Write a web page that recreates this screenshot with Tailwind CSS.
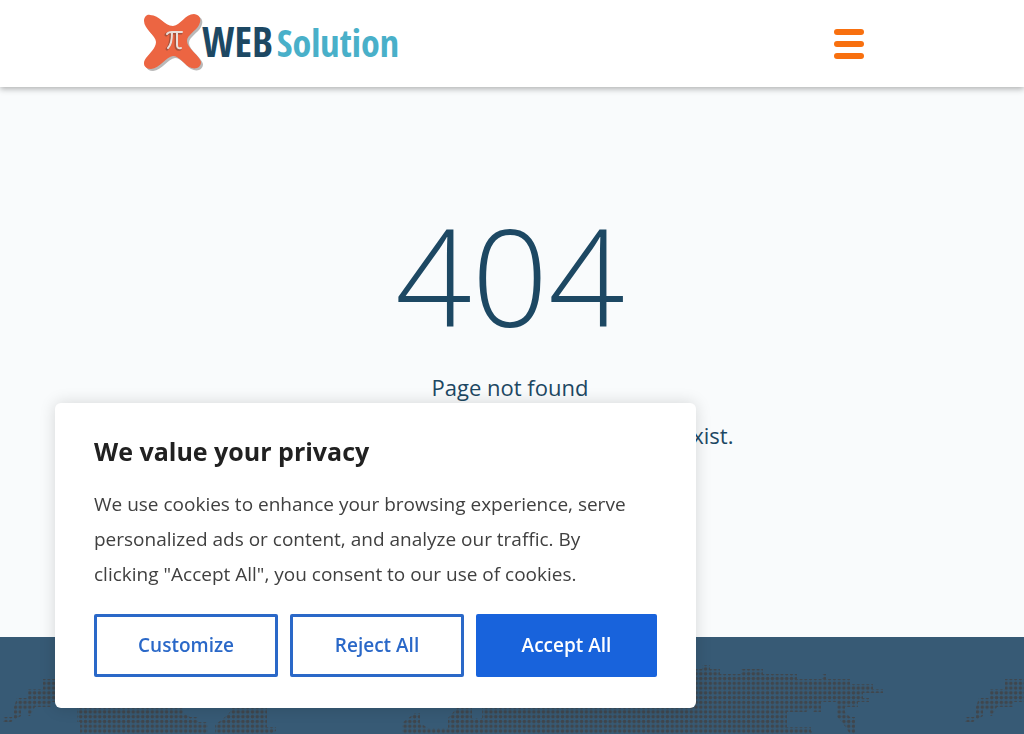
<!DOCTYPE html>
<html lang="en">

<head>
	<meta charset="utf-8" />
	<meta name="viewport" content="width=device-width, initial-scale=1" />
	<title>Page not found - WEB Solution</title>
	<script src="https://cdn.jsdelivr.net/npm/@tailwindcss/browser@4"></script>
</head>

<body class="min-h-screen flex flex-col bg-[#f9fbfc] font-['Open_Sans','Noto_Sans',sans-serif] text-[#1d4863] overflow-x-hidden">

	<header class="relative bg-white shadow-[0_2px_6px_rgba(0,0,0,0.3)] px-36">
		<div class="h-[87px] flex items-center justify-between">
			<a href="#" class="flex items-center">
				<svg class="w-[58px] h-[60px] overflow-visible" viewBox="0 0 58 60" aria-hidden="true">
					<path transform="translate(2 2)" fill="#8a8a8a" opacity="0.6" d="M6 1C16 1 20 12 29 12C37 11 41 0 50 0C56 1 58 5 55 11C52 17 43 21 43 27C43 34 56 42 57 48C57 54 51 56 45 53C39 49 35 42 29 42C22 43 16 54 7 55C0 55-2 49 2 44C5 40 12 34 12 28C12 22 0 15 0 7C0 3 3 0 6 1Z" />
					<path fill="#ec6542" d="M6 1C16 1 20 12 29 12C37 11 41 0 50 0C56 1 58 5 55 11C52 17 43 21 43 27C43 34 56 42 57 48C57 54 51 56 45 53C39 49 35 42 29 42C22 43 16 54 7 55C0 55-2 49 2 44C5 40 12 34 12 28C12 22 0 15 0 7C0 3 3 0 6 1Z" />
					<g fill="none" stroke-linecap="round">
						<path stroke="#a8523c" stroke-width="3" d="M22 21Q23 19 27 19H37M27 20Q27 31 23 35M32 20V32Q32 36 36 35" />
						<path stroke="#eadfdb" stroke-width="2" d="M23 20Q24 18 28 18H38M28 19Q28 30 24 34M33 19V31Q33 35 37 34" />
					</g>
				</svg>
				<span class="pb-1 font-['Open_Sans_Condensed','Liberation_Sans_Narrow',sans-serif] font-bold leading-none whitespace-nowrap flex items-baseline gap-1">
					<span class="text-[41px]">WEB</span>
					<span class="text-[38px] text-[#49b0c9]">Solution</span>
				</span>
			</a>
			<button type="button" aria-label="Menu" class="flex flex-col gap-[6px] mr-4">
				<span class="block w-[30px] h-[6px] rounded-full bg-[#f8700f]"></span>
				<span class="block w-[30px] h-[6px] rounded-full bg-[#f8700f]"></span>
				<span class="block w-[30px] h-[6px] rounded-full bg-[#f8700f]"></span>
			</button>
		</div>
	</header>

	<main class="h-[550px] pt-27 pr-1 text-center">
		<h1 class="text-[134px] leading-[160px] font-light">404</h1>
		<p class="mt-4 text-[22px] leading-8">Page not found</p>
		<p class="mt-4 text-[22px] leading-8">The page you are looking for does not exist.</p>
	</main>

	<footer class="grow bg-[#375a75] overflow-hidden">
		<svg class="w-full h-[97px]" viewBox="0 0 1024 97" preserveAspectRatio="xMinYMin slice" aria-hidden="true">
			<defs>
				<pattern id="dots" width="4.77" height="4.77" patternUnits="userSpaceOnUse" patternTransform="translate(2 .9)">
					<circle cx="2.4" cy="2.4" r="1.8" fill="#3f464d" />
				</pattern>
				<path id="alaska" d="M1005 42H1024V65H1013V70H997L992 79H990V73H983V79L973 85H965V80H976V70L979 61H990V52H1005Z" />
			</defs>
			<g fill="url(#dots)">
				<!-- Eurasia -->
				<path d="M402 97V86L415 76H420V86L428 91H448V81L457 71H472V81H482V60L696 32H702V28H710V32H720V37H741V32H763V37H797V42H822V37H826V42H850V47H873V52H883V56H863V61H869V65H858V70H845V75L850 80H855V97H850L842 85L837 80V65H821V75H813V70L806 75H787V90H811V94L815 97Z" />
				<!-- Americas -->
				<path d="M77 71H183V76L190 80H198V85H208V97H80V85H77ZM215 97V88L225 80L230 75V71H267V90H276V94L270 97Z" />
				<use href="#alaska" />
				<use href="#alaska" x="-962" />
				<path d="M62 42H80V65H62Z" />
			</g>
		</svg>
	</footer>

	<section aria-labelledby="cookieTitle" class="fixed left-[55px] bottom-[26px] w-[641px] max-w-[90%] bg-white rounded-md shadow-[0_0_16px_rgba(0,0,0,0.15)] px-[39px] pt-[30px] pb-[31px]">
		<h2 id="cookieTitle" class="text-[25px] leading-9 font-bold text-[#212121]">We value your privacy</h2>
		<p class="mt-[18px] pr-5 text-[19px] leading-[35px] text-[#404040]">We use cookies to enhance your browsing experience, serve personalized ads or content, and analyze our traffic. By clicking "Accept All", you consent to our use of cookies.</p>
		<div class="mt-[22px] flex gap-3 text-[19px] font-semibold">
			<button type="button" class="w-[184px] h-[63px] rounded-xs border-3 border-[#2a68c8] text-[#2a68c8]">Customize</button>
			<button type="button" class="w-[174px] h-[63px] rounded-xs border-3 border-[#2a68c8] text-[#2a68c8]">Reject All</button>
			<button type="button" class="w-[181px] h-[63px] rounded-xs border-3 border-[#1863dc] bg-[#1863dc] text-white">Accept All</button>
		</div>
	</section>

</body>

</html>
